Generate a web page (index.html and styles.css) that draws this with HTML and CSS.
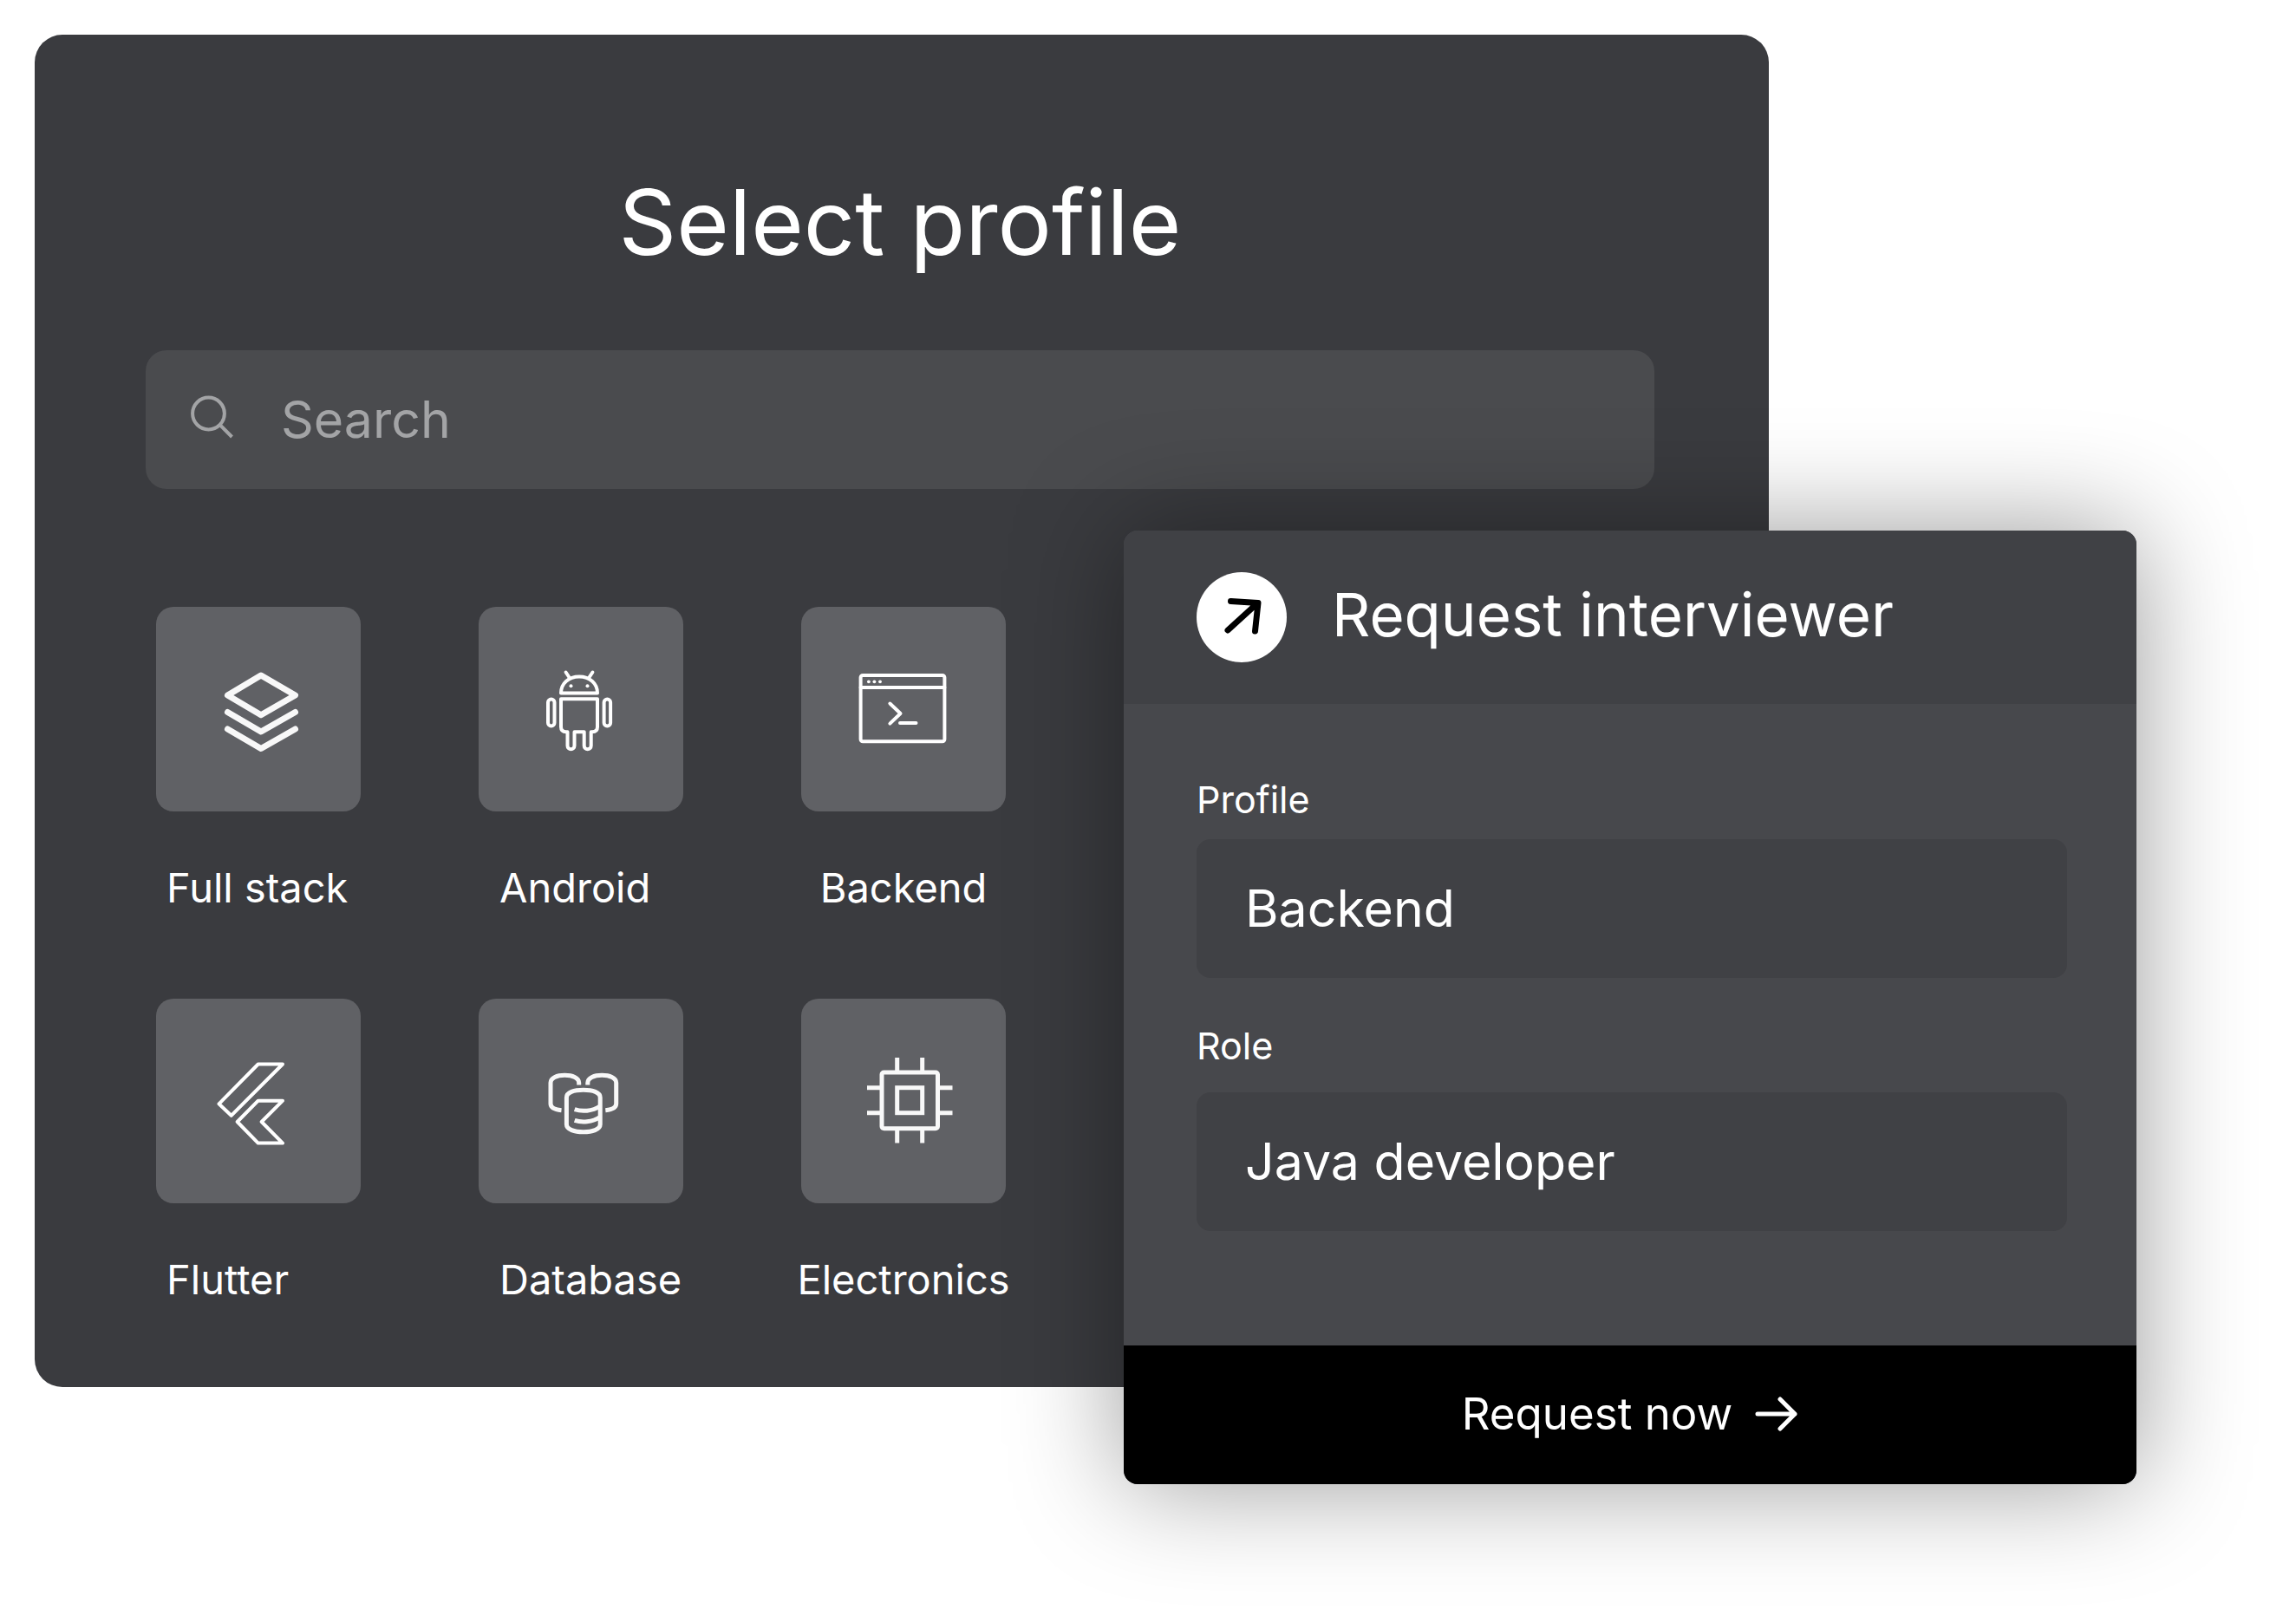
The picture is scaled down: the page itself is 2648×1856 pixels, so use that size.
FILE: index.html
```html
<!DOCTYPE html>
<html lang="en">
<head>
<meta charset="utf-8">
<meta name="viewport" content="width=device-width, initial-scale=1">
<title>Select profile</title>
<link rel="stylesheet" href="styles.css">
</head>
<body>
<main class="stage">
  <section class="panel" aria-labelledby="panel-title">
    <h1 class="panel-title" id="panel-title">Select profile</h1>
    <label class="search">
      <svg class="search-icon" viewBox="0 0 52 52" aria-hidden="true"><circle cx="20.500" cy="19" r="18.400"/><path d="M33.500 32l14 14"/></svg>
      <input class="search-input" type="search" placeholder="Search" aria-label="Search">
    </label>
    <ul class="profiles">
      <li class="profile">
        <button class="tile" type="button" aria-labelledby="p-full">
          <svg class="icon icon-layers" viewBox="0 0 236 236" aria-hidden="true"><path d="M121 79l39.500 23L121 124.700 82.500 102z"/><path d="M82.500 121.500L121 144l39.500-22.500M82.500 141L121 163.500 160.500 141"/></svg>
        </button>
        <span class="profile-name" id="p-full">Full stack</span>
      </li>
      <li class="profile">
        <button class="tile" type="button" aria-labelledby="p-android">
          <svg class="icon icon-android" viewBox="0 0 236 236" aria-hidden="true"><path d="M95 99.500C95 88 104 80.500 116 80.500S137 88 137 99.500z"/><path d="M100.600 75.500l4 6M131.400 75.500l-4 6"/><circle class="dot" cx="106.500" cy="91.300" r="2"/><circle class="dot" cx="125.500" cy="91.300" r="2"/><path d="M95 106.300H137V138.500Q137 144.300 131 144.300H129.700V160.200a3.900 3.900 0 0 1-8 0V144.300H110.500V160.200a3.900 3.900 0 0 1-8 0V144.300H101Q95 144.300 95 138.500z"/><rect x="80" y="106.500" width="7.500" height="31" rx="3.750"/><rect x="144.600" y="106.500" width="7.500" height="31" rx="3.750"/></svg>
        </button>
        <span class="profile-name" id="p-android">Android</span>
      </li>
      <li class="profile">
        <button class="tile" type="button" aria-labelledby="p-backend">
          <svg class="icon icon-terminal" viewBox="0 0 236 236" aria-hidden="true"><rect x="68.600" y="79" width="96.800" height="76.300" rx="2.500"/><path d="M68.600 93H165.400"/><circle class="dot" cx="77.900" cy="86.300" r="1.900"/><circle class="dot" cx="84.400" cy="86.300" r="1.900"/><circle class="dot" cx="91" cy="86.300" r="1.900"/><path d="M102.400 111.500L114.500 123 102.400 134.600M114 134H132.500"/></svg>
        </button>
        <span class="profile-name" id="p-backend">Backend</span>
      </li>
      <li class="profile">
        <button class="tile" type="button" aria-labelledby="p-flutter">
          <svg class="icon icon-flutter" viewBox="0 0 236 236" aria-hidden="true"><path d="M117.700 75.500H146L86.700 134.800 72.500 121.300z"/><path d="M117.700 117.700H146L121.700 142 146 166.600H117.700L93.700 142z"/></svg>
        </button>
        <span class="profile-name" id="p-flutter">Flutter</span>
      </li>
      <li class="profile">
        <button class="tile" type="button" aria-labelledby="p-database">
          <svg class="icon icon-database" viewBox="0 0 236 236" aria-hidden="true"><path d="M101.400 114C101.400 108 110 105.300 120.800 105.300S140.200 108 140.200 114V145C140.200 151 131 153.700 120.800 153.700S101.400 151 101.400 145z"/><path d="M110.700 127.700C119 130.500 131 130 140 124M110.700 140.400C119 143.200 131 142.600 140 136.500"/><path d="M115.700 99.500V97C115.700 91 108 88.300 99.300 88.300S83 91 83 97V121C83 125.500 88 128 95.500 128.700"/><path d="M125.800 99.500V97C125.800 91 133.500 88.300 142.200 88.300S158.700 91 158.700 97V121C158.700 125.500 153.700 128 146.300 128.700"/></svg>
        </button>
        <span class="profile-name" id="p-database">Database</span>
      </li>
      <li class="profile">
        <button class="tile" type="button" aria-labelledby="p-electronics">
          <svg class="icon icon-chip" viewBox="0 0 236 236" aria-hidden="true"><rect x="93" y="85" width="64.500" height="64.700" rx="2.500"/><rect x="110.700" y="102.700" width="29" height="29"/><path d="M110.700 68V85M139.700 68V85M110.700 149.700V166.500M139.700 149.700V166.500M76 102.700H93M76 131.700H93M157.500 102.700H174.500M157.500 131.700H174.500"/></svg>
        </button>
        <span class="profile-name" id="p-electronics">Electronics</span>
      </li>
    </ul>
  </section>

  <form class="request" aria-labelledby="request-title">
    <header class="request-header">
      <svg class="request-badge" viewBox="0 0 104 104" aria-hidden="true"><circle cx="52" cy="52" r="52"/><path d="M39.500 33.500L71 35.500 67.500 68M70 36L36 67"/></svg>
      <h2 class="request-title" id="request-title">Request interviewer</h2>
    </header>
    <div class="request-body">
      <div class="field">
        <label class="field-label" for="profile">Profile</label>
        <input class="field-input" id="profile" type="text" value="Backend">
      </div>
      <div class="field field-roomy">
        <label class="field-label" for="role">Role</label>
        <input class="field-input" id="role" type="text" value="Java developer">
      </div>
    </div>
    <button class="request-submit" type="button">
      Request now
      <svg class="submit-icon" viewBox="0 0 48 48" aria-hidden="true"><path d="M1 25H44M27 8L44 25 27 42"/></svg>
    </button>
  </form>
</main>
</body>
</html>
```
FILE: styles.css
```css
*,
*::before,
*::after {
  box-sizing: border-box;
}

body {
  margin: 0;
  background: #fff;
  color: #fff;
  font-family: Inter, "Liberation Sans", sans-serif;
}

h1,
h2,
ul {
  margin: 0;
  padding: 0;
  font-weight: 400;
  list-style: none;
}

button,
input {
  border: 0;
  margin: 0;
  color: inherit;
  font: inherit;
}

svg {
  display: block;
  flex: none;
  overflow: visible;
  fill: none;
  stroke: currentColor;
  stroke-linecap: round;
  stroke-linejoin: round;
}

.stage {
  position: relative;
  padding: 40px 40px 256px;
}

/* Profile picker */
.panel {
  width: calc(100% - 568px);
  padding: 158px 132px 96px 128px;
  border-radius: 32px;
  background: #3a3b3f;
}

.panel-title {
  font-size: 104px;
  line-height: 116px;
  text-align: center;
}

.search {
  display: flex;
  align-items: center;
  gap: 52px;
  height: 160px;
  margin-top: 90px;
  padding: 0 52px;
  border-radius: 24px;
  background: #4a4b4e;
  color: #a3a4a6;
}

.search-icon {
  width: 52px;
  height: 52px;
  stroke-width: 4;
  stroke-linecap: butt;
}

.search-input {
  flex: 1;
  min-width: 0;
  padding: 0;
  background: none;
  font-size: 59px;
  line-height: 68px;
  outline: none;
}

.search-input::placeholder {
  color: inherit;
  opacity: 1;
}

.profiles {
  display: grid;
  grid-template-columns: repeat(3, 236px);
  gap: 100px 136px;
  margin-top: 136px;
  padding-left: 12px;
}

.profile {
  display: flex;
  flex-direction: column;
  gap: 60px;
}

.tile {
  display: block;
  width: 236px;
  height: 236px;
  padding: 0;
  border-radius: 20px;
  background: #606165;
  cursor: pointer;
}

.icon {
  width: 100%;
  height: 100%;
  stroke-width: 4;
}

.icon .dot {
  fill: currentColor;
  stroke: none;
}

.icon-layers {
  color: #f8f8f8;
  stroke-width: 7;
}

.icon-database,
.icon-chip {
  color: #f8f8f8;
  stroke-width: 5;
  stroke-linecap: butt;
}

.icon-chip {
  stroke-linejoin: miter;
}

.profile-name {
  padding-left: 12px;
  font-size: 47px;
  line-height: 56px;
  white-space: nowrap;
}

.profile:nth-child(3n + 2) .profile-name {
  padding-left: 24px;
}

.profile:nth-child(3n) .profile-name {
  align-self: center;
  padding-left: 0;
}

/* Request dialog */
.request {
  position: absolute;
  top: 612px;
  right: 184px;
  width: calc(50% - 156px);
  border-radius: 16px;
  background: #47484c;
  box-shadow: 0 0 128px rgba(0, 0, 0, 0.4);
  overflow: hidden;
}

.request-header {
  display: flex;
  align-items: center;
  gap: 52px;
  padding: 48px 84px;
  background: #404145;
}

.request-badge {
  width: 104px;
  height: 104px;
  stroke: #000;
  stroke-width: 7;
}

.request-badge circle {
  fill: #fff;
  stroke: none;
}

.request-title {
  padding-bottom: 6px;
  font-size: 69px;
  line-height: 96px;
  white-space: nowrap;
}

.request-body {
  display: grid;
  gap: 54px;
  padding: 86px 80px 132px 84px;
}

.field {
  display: grid;
  gap: 22px;
}

.field-roomy {
  gap: 30px;
}

.field-label {
  font-size: 43px;
  line-height: 48px;
}

.field-input {
  width: 100%;
  height: 160px;
  padding: 0 56px 2px;
  border-radius: 16px;
  background: #404145;
  font-size: 59px;
}

.request-submit {
  display: flex;
  align-items: center;
  justify-content: center;
  gap: 28px;
  width: 100%;
  height: 160px;
  padding: 0 0 4px;
  background: #000;
  font-size: 51px;
  cursor: pointer;
}

.submit-icon {
  width: 48px;
  height: 48px;
  stroke-width: 5;
}
```
